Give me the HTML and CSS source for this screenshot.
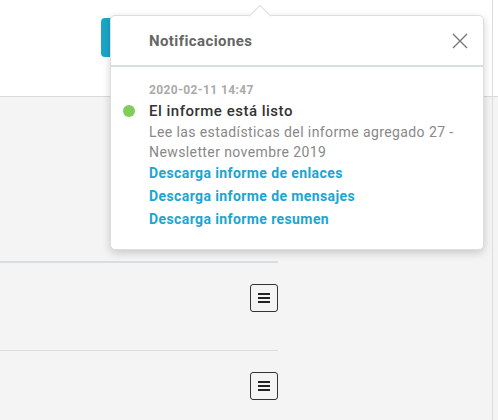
FILE: index.html
```html
<!DOCTYPE html>
<html lang="es">
<head>
<meta charset="utf-8">
<link rel="stylesheet" href="styles.css">
</head>
<body>
<div class="page">
  <div class="main">
    <header class="topbar">
      <button class="primary-btn"></button>
    </header>
    <div class="content">
      <div class="list">
        <div class="row row-first"></div>
        <div class="row row-menu">
          <button class="menu-btn"><span></span><span></span><span></span></button>
        </div>
        <div class="row row-menu row-last">
          <button class="menu-btn"><span></span><span></span><span></span></button>
        </div>
      </div>
    </div>
  </div>
  <div class="side"></div>

  <div class="notif">
    <div class="notif-head">
      <span class="notif-title">Notificaciones</span>
      <svg class="close" width="16" height="16" viewBox="0 0 16 16"><path d="M1 1L15 15M15 1L1 15" stroke="#777" stroke-width="1.4" fill="none"/></svg>
    </div>
    <div class="notif-body">
      <div class="date">2020-02-11 14:47</div>
      <div class="item-title"><span class="dot"></span>El informe está listo</div>
      <div class="desc">Lee las estadísticas del informe agregado 27 - Newsletter novembre 2019</div>
      <a class="link" href="#">Descarga informe de enlaces</a>
      <a class="link" href="#">Descarga informe de mensajes</a>
      <a class="link" href="#">Descarga informe resumen</a>
    </div>
  </div>
</div>
</body>
</html>
```
FILE: styles.css
```css
html, body { margin: 0; padding: 0; }
body {
  font-family: Roboto, "Liberation Sans", sans-serif;
  background: #f4f4f4;
  width: 498px;
  height: 420px;
  overflow: hidden;
  letter-spacing: 0.4px;
}
.page {
  position: relative;
  display: flex;
  height: 420px;
}
.main {
  width: 492px;
  display: flex;
  flex-direction: column;
  flex-shrink: 0;
}
.side {
  flex: 1;
  border-left: 1px solid #dcdcdc;
  background: linear-gradient(#fff 0 96px, #d5dbe0 96px 97px, #f4f4f4 97px);
}
.topbar {
  flex-shrink: 0;
  height: 97px;
  box-sizing: border-box;
  background: #fff;
  border-bottom: 1px solid #d5dbe0;
  padding-left: 101px;
  padding-top: 18px;
}
.primary-btn {
  display: block;
  width: 60px;
  height: 39px;
  border: 0;
  border-radius: 4px;
  background: #1ba5c9;
}
.content { flex: 1; min-height: 0; }
.list { width: 278px; }
.row-first {
  height: 164px;
  border-bottom: 2px solid #d8dde2;
}
.row-menu {
  display: flex;
  justify-content: flex-end;
  align-items: flex-start;
  padding-top: 21px;
  height: 88px;
  box-sizing: border-box;
  border-bottom: 1px solid #dcdcdc;
}
.row-last { border-bottom: 0; }
.menu-btn {
  width: 28px;
  height: 28px;
  box-sizing: border-box;
  border: 1.3px solid #333;
  border-radius: 3px;
  background: transparent;
  padding: 0;
  display: flex;
  flex-direction: column;
  align-items: center;
  justify-content: center;
  gap: 1.6px;
}
.menu-btn span {
  display: block;
  width: 12px;
  height: 2px;
  background: #222;
}

.notif {
  position: absolute;
  left: 110px;
  top: 15px;
  width: 374px;
  height: 235px;
  box-sizing: border-box;
  background: #fff;
  border: 1px solid #dcdfe2;
  border-radius: 5px;
  box-shadow: 0 3px 8px rgba(0,0,0,0.18);
}
.notif::before {
  content: "";
  position: absolute;
  left: 141px;
  top: -8px;
  width: 15px;
  height: 15px;
  background: #fff;
  border-left: 1px solid #dcdfe2;
  border-top: 1px solid #dcdfe2;
  transform: rotate(45deg);
}
.notif-head {
  height: 49px;
  border-bottom: 2px solid #d8dde2;
  display: flex;
  align-items: center;
  justify-content: space-between;
  padding: 0 15px 0 38px;
  position: relative;
}
.notif-title {
  font-size: 15px;
  font-weight: 700;
  color: #666;
}
.close { display: block; }
.notif-body {
  padding: 14px 10px 18px 38px;
}
.date {
  font-size: 12px;
  font-weight: 700;
  color: #aaa;
  line-height: 18px;
}
.item-title {
  position: relative;
  font-size: 15px;
  font-weight: 500;
  color: #333;
  line-height: 22px;
  margin-top: 1px;
  letter-spacing: 0.5px;
}
.dot {
  position: absolute;
  left: -26px;
  top: 5px;
  width: 12px;
  height: 12px;
  border-radius: 50%;
  background: #7ece57;
}
.desc {
  font-size: 14px;
  color: #888;
  line-height: 20px;
}
.link {
  display: block;
  font-size: 14px;
  font-weight: 700;
  color: #1ba5cf;
  text-decoration: none;
  line-height: 23px;
}
```
